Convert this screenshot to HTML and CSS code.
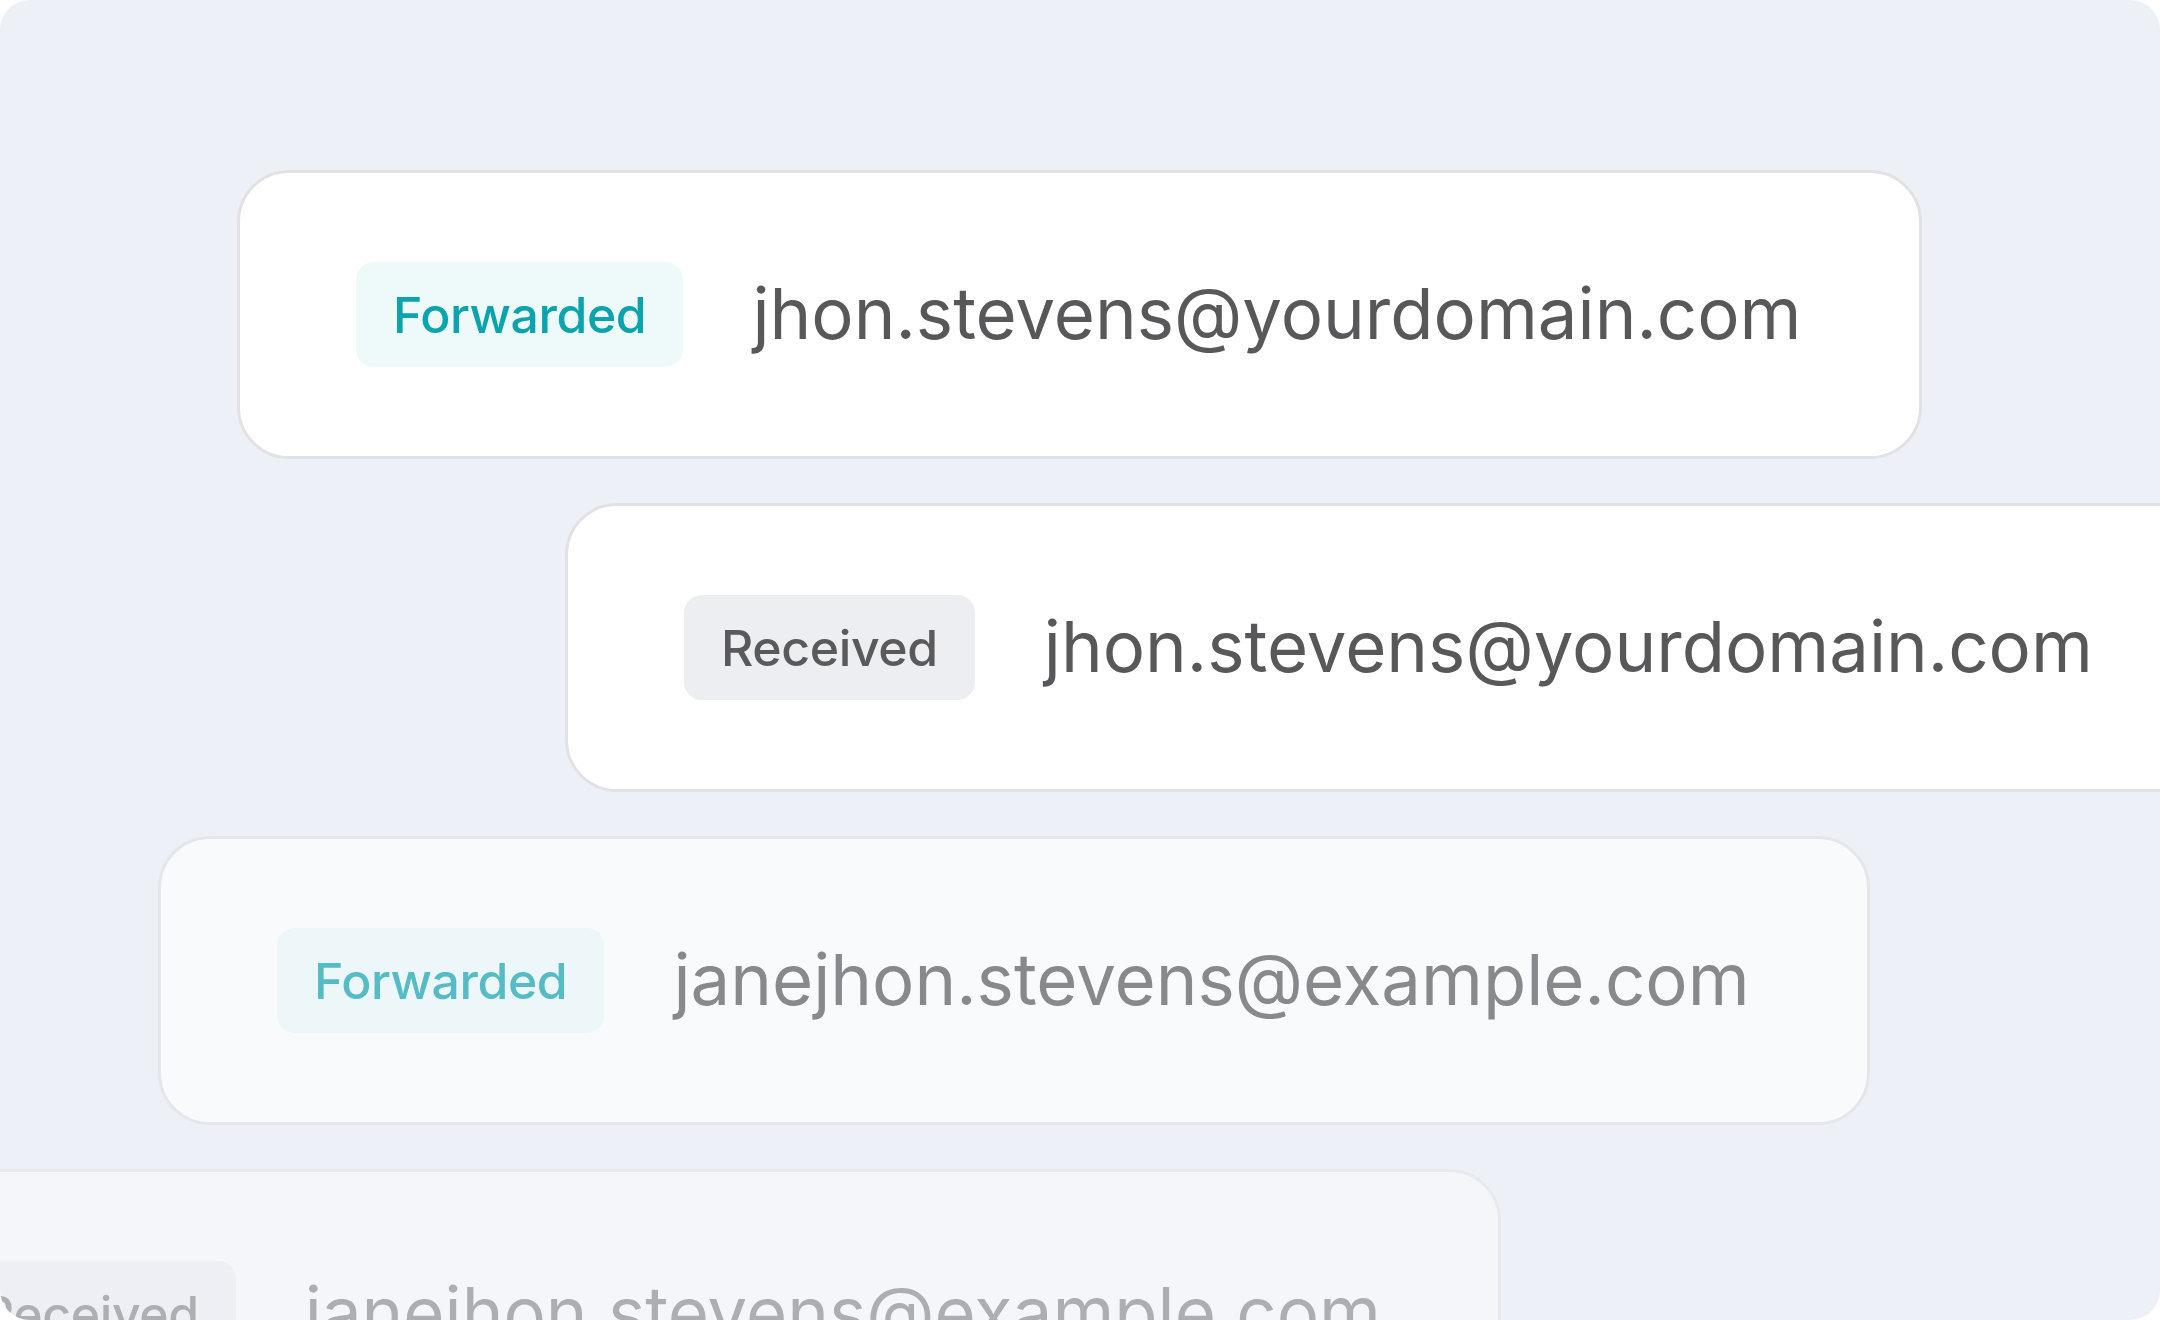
FILE: index.html
```html
<!DOCTYPE html>
<html lang="en">
<head>
<meta charset="utf-8">
<title>Email routing</title>
<link rel="stylesheet" href="styles.css">
</head>
<body>
<div class="canvas">
  <div class="stack">
    <div class="row row-1">
      <span class="badge badge-forwarded">Forwarded</span>
      <span class="email">jhon.stevens@yourdomain.com</span>
    </div>
    <div class="row row-2">
      <span class="badge badge-received">Received</span>
      <span class="email">jhon.stevens@yourdomain.com</span>
    </div>
    <div class="row row-3">
      <span class="badge badge-forwarded">Forwarded</span>
      <span class="email">janejhon.stevens@example.com</span>
    </div>
    <div class="row row-4">
      <span class="badge badge-received">Received</span>
      <span class="email">janejhon.stevens@example.com</span>
    </div>
  </div>
</div>
</body>
</html>
```

FILE: styles.css
```css
html, body {
  margin: 0;
  padding: 0;
  background: #ffffff;
}

body {
  font-family: Inter, "Noto Sans", "Liberation Sans", sans-serif;
}

.canvas {
  width: 2160px;
  height: 1320px;
  background: #EDF0F7;
  border-radius: 30px;
  overflow: hidden;
  box-sizing: border-box;
  padding-top: 170px;
}

.stack {
  display: flex;
  flex-direction: column;
  align-items: flex-start;
  gap: 44px;
}

.row {
  flex: none;
  display: flex;
  align-items: center;
  gap: 69px;
  height: 289px;
  box-sizing: border-box;
  padding: 0 117px 0 116px;
  background: #ffffff;
  border: 3px solid #E2E2E4;
  border-radius: 52px;
  white-space: nowrap;
}

.row-1 { margin-left: 237px; }
.row-2 { margin-left: 565px; }
.row-3 { margin-left: 158px; opacity: 0.67; }
.row-4 { margin-left: -174px; opacity: 0.43; }

.badge {
  display: flex;
  align-items: center;
  height: 105px;
  box-sizing: border-box;
  padding: 0 37px;
  border-radius: 18px;
  font-size: 50px;
  letter-spacing: -0.4px;
  font-weight: 500;
  line-height: 1;
}

.badge-forwarded {
  background: #EEF9FA;
  color: #0BA3AD;
}

.badge-received {
  background: #EDEEF1;
  color: #5A5A5C;
}

.email {
  font-size: 70.7px;
  font-weight: 400;
  color: #58585A;
  line-height: 1;
}
```
